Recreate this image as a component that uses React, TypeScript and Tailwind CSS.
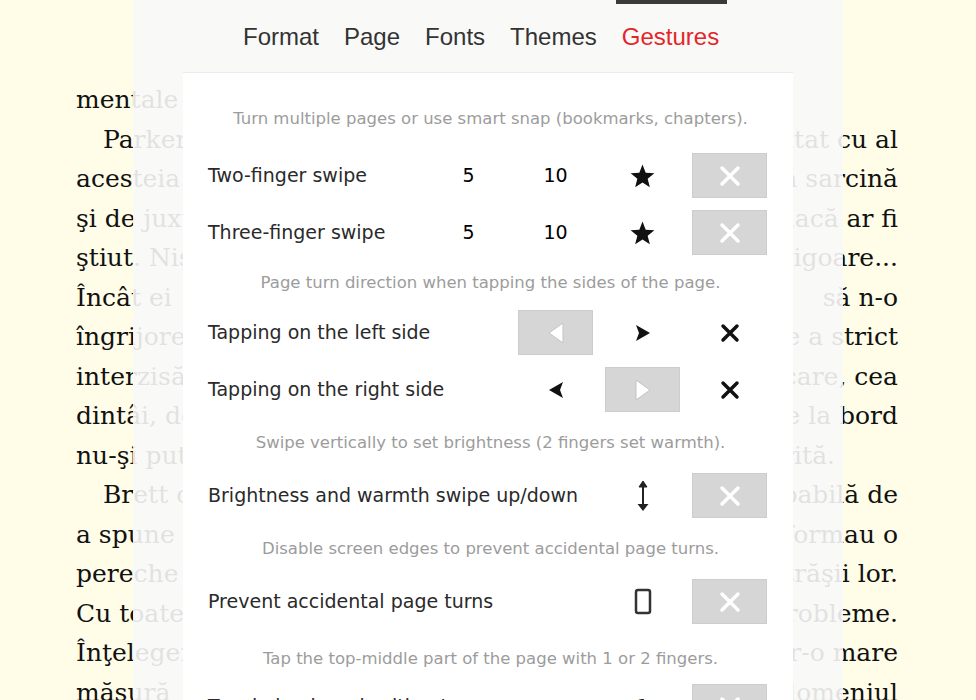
import React from 'react';

// book page lines behind the settings overlay
const LINES: { l: string; r: string; indent?: boolean; end?: boolean }[] = [
  { l: 'mentale şi', r: '', end: true },
  { l: 'Parker a', r: 'tratat cu al', indent: true },
  { l: 'acesteia. Dar', r: 'această sarcină' },
  { l: 'şi de juxta', r: 'dacă ar fi' },
  { l: 'ştiut. Nişte', r: 'în vigoare...' },
  { l: 'Încât ei', r: 'să n-o' },
  { l: 'îngrijorea', r: 'de a strict' },
  { l: 'interzisă', r: 'care, cea' },
  { l: 'dintâi, de', r: 'de la bord' },
  { l: 'nu-şi putea', r: 'favorită.', end: true },
  { l: 'Brett c', r: 'incapabilă de', indent: true },
  { l: 'a spune', r: 'formau o' },
  { l: 'pereche', r: 'străşii lor.' },
  { l: 'Cu toate', r: 'probleme.' },
  { l: 'Înţelegeri', r: 'într-o mare' },
  { l: 'măsură', r: 'domeniul' },
];

const TABS = ['Format', 'Page', 'Fonts', 'Themes', 'Gestures'];

function XWhite() {
  return (
    <svg width="22" height="22" viewBox="0 0 22 22">
      <path d="M3 3L19 19M19 3L3 19" stroke="white" strokeWidth="3.5" strokeLinecap="round" />
    </svg>
  );
}

function XBlack() {
  return (
    <svg width="20" height="20" viewBox="0 0 20 20">
      <path d="M3 3L17 17M17 3L3 17" stroke="#111" strokeWidth="3.5" strokeLinecap="round" />
    </svg>
  );
}

function Star() {
  return (
    <svg width="25" height="24" viewBox="0 0 24 23">
      <polygon
        points="12,0.5 15.06,8.29 23.41,8.79 16.95,14.11 19.05,22.21 12,17.7 4.95,22.21 7.05,14.11 0.59,8.79 8.94,8.29"
        fill="#111"
      />
    </svg>
  );
}

function TriRight({ white }: { white?: boolean }) {
  if (white)
    return (
      <svg width="18" height="22" viewBox="0 0 18 22">
        <path d="M2 1L16 11L2 21Z" fill="white" stroke="#c4c4c4" strokeWidth="1" />
      </svg>
    );
  return (
    <svg width="16" height="18" viewBox="0 0 16 18">
      <path d="M1 1L15 9L1 17L4 9Z" fill="#111" />
    </svg>
  );
}

function TriLeft({ white }: { white?: boolean }) {
  if (white)
    return (
      <svg width="18" height="22" viewBox="0 0 18 22">
        <path d="M16 1L2 11L16 21Z" fill="white" stroke="#c4c4c4" strokeWidth="1" />
      </svg>
    );
  return (
    <svg width="16" height="18" viewBox="0 0 16 18">
      <path d="M15 1L1 9L15 17L12 9Z" fill="#111" />
    </svg>
  );
}

function UpDown() {
  return (
    <svg width="14" height="34" viewBox="0 0 14 34">
      <path d="M7 2L11 8H3Z" fill="#222" stroke="#222" strokeWidth="1" strokeLinejoin="round" />
      <line x1="7" y1="7" x2="7" y2="26" stroke="#222" strokeWidth="2" />
      <path d="M1.5 25H12.5L7 32Z" fill="#222" />
    </svg>
  );
}

function Phone() {
  return (
    <svg width="18" height="27" viewBox="0 0 18 27">
      <rect x="2" y="2" width="14" height="23" rx="2" fill="none" stroke="#333" strokeWidth="2.5" />
    </svg>
  );
}

function GrayButton({ children }: { children: React.ReactNode }) {
  return (
    <div className="w-[75px] h-[45px] shrink-0 bg-[#d6d6d6] border border-[#cdcdcd] flex items-center justify-center">
      {children}
    </div>
  );
}

function Cell({ children }: { children?: React.ReactNode }) {
  return <div className="w-[87px] shrink-0 h-full flex items-center justify-center">{children}</div>;
}

function Row({ label, cells }: { label: string; cells: React.ReactNode[] }) {
  return (
    <div className="h-[57px] shrink-0 flex items-center">
      <div className="w-[217px] shrink-0 whitespace-nowrap text-[#2a2a2a]">{label}</div>
      {cells.map((c, i) => (
        <Cell key={i}>{c}</Cell>
      ))}
    </div>
  );
}

function Hint({ text, h }: { text: string; h: string }) {
  return (
    <div className={`${h} shrink-0 flex items-center justify-center text-[16.5px] leading-[20px] text-[#9c9c9c] whitespace-nowrap`}>
      {text}
    </div>
  );
}

export default function App() {
  return (
    <div className="relative w-[976px] h-[700px] overflow-hidden bg-[#fffde8]">
      {/* page text */}
      <div className="pt-[80px] pl-[76px] pr-[78px] font-['DejaVu_Serif',serif] text-[25px] leading-[39.5px] text-[#111]">
        {LINES.map((ln, i) => (
          <div
            key={i}
            className={`flex justify-between whitespace-nowrap ${ln.indent ? 'pl-[27px]' : ''} ${ln.end && ln.r ? 'pr-[63px]' : ''}`}
          >
            <span>{ln.l}</span>
            <span>{ln.r}</span>
          </div>
        ))}
      </div>

      {/* settings overlay */}
      <div className="absolute top-0 bottom-0 left-[133px] w-[710px] bg-[#f8f8f8]/90 flex flex-col overflow-hidden">
        <div className="h-[4px] shrink-0 ml-[483px] w-[111px] bg-[#3b3b3b]" />
        <div className="h-[68px] shrink-0 pb-[2px] pl-[110px] flex items-center gap-[25px] text-[24px] font-['Liberation_Sans',Arial,sans-serif] text-[#333]">
          {TABS.map((t) => (
            <span key={t} className={t === 'Gestures' ? 'text-[#e3262a]' : ''}>
              {t}
            </span>
          ))}
        </div>

        <div className="ml-[50px] w-[610px] flex-1 flex flex-col bg-white border-t border-[#ececec] pl-[25px] pr-[20px] font-['DejaVu_Sans',sans-serif] text-[19px]">
          <div className="h-[74px] shrink-0 pt-[36px] text-center text-[16.5px] leading-[20px] text-[#9c9c9c] whitespace-nowrap">
            Turn multiple pages or use smart snap (bookmarks, chapters).
          </div>
          <Row label="Two-finger swipe" cells={['5', '10', <Star />, <GrayButton><XWhite /></GrayButton>]} />
          <Row label="Three-finger swipe" cells={['5', '10', <Star />, <GrayButton><XWhite /></GrayButton>]} />
          <Hint h="h-[43px]" text="Page turn direction when tapping the sides of the page." />
          <Row
            label="Tapping on the left side"
            cells={[null, <GrayButton><TriLeft white /></GrayButton>, <TriRight />, <XBlack />]}
          />
          <Row
            label="Tapping on the right side"
            cells={[null, <TriLeft />, <GrayButton><TriRight white /></GrayButton>, <XBlack />]}
          />
          <Hint h="h-[49px]" text="Swipe vertically to set brightness (2 fingers set warmth)." />
          <Row
            label="Brightness and warmth swipe up/down"
            cells={[null, null, <UpDown />, <GrayButton><XWhite /></GrayButton>]}
          />
          <Hint h="h-[49px]" text="Disable screen edges to prevent accidental page turns." />
          <Row
            label="Prevent accidental page turns"
            cells={[null, null, <Phone />, <GrayButton><XWhite /></GrayButton>]}
          />
          <Hint h="h-[48px] pt-[10px]" text="Tap the top-middle part of the page with 1 or 2 fingers." />
          <Row
            label="Toggle bookmark with a tap"
            cells={[null, null, <span className="text-[#222]">1</span>, <GrayButton><XWhite /></GrayButton>]}
          />
        </div>
      </div>
    </div>
  );
}
